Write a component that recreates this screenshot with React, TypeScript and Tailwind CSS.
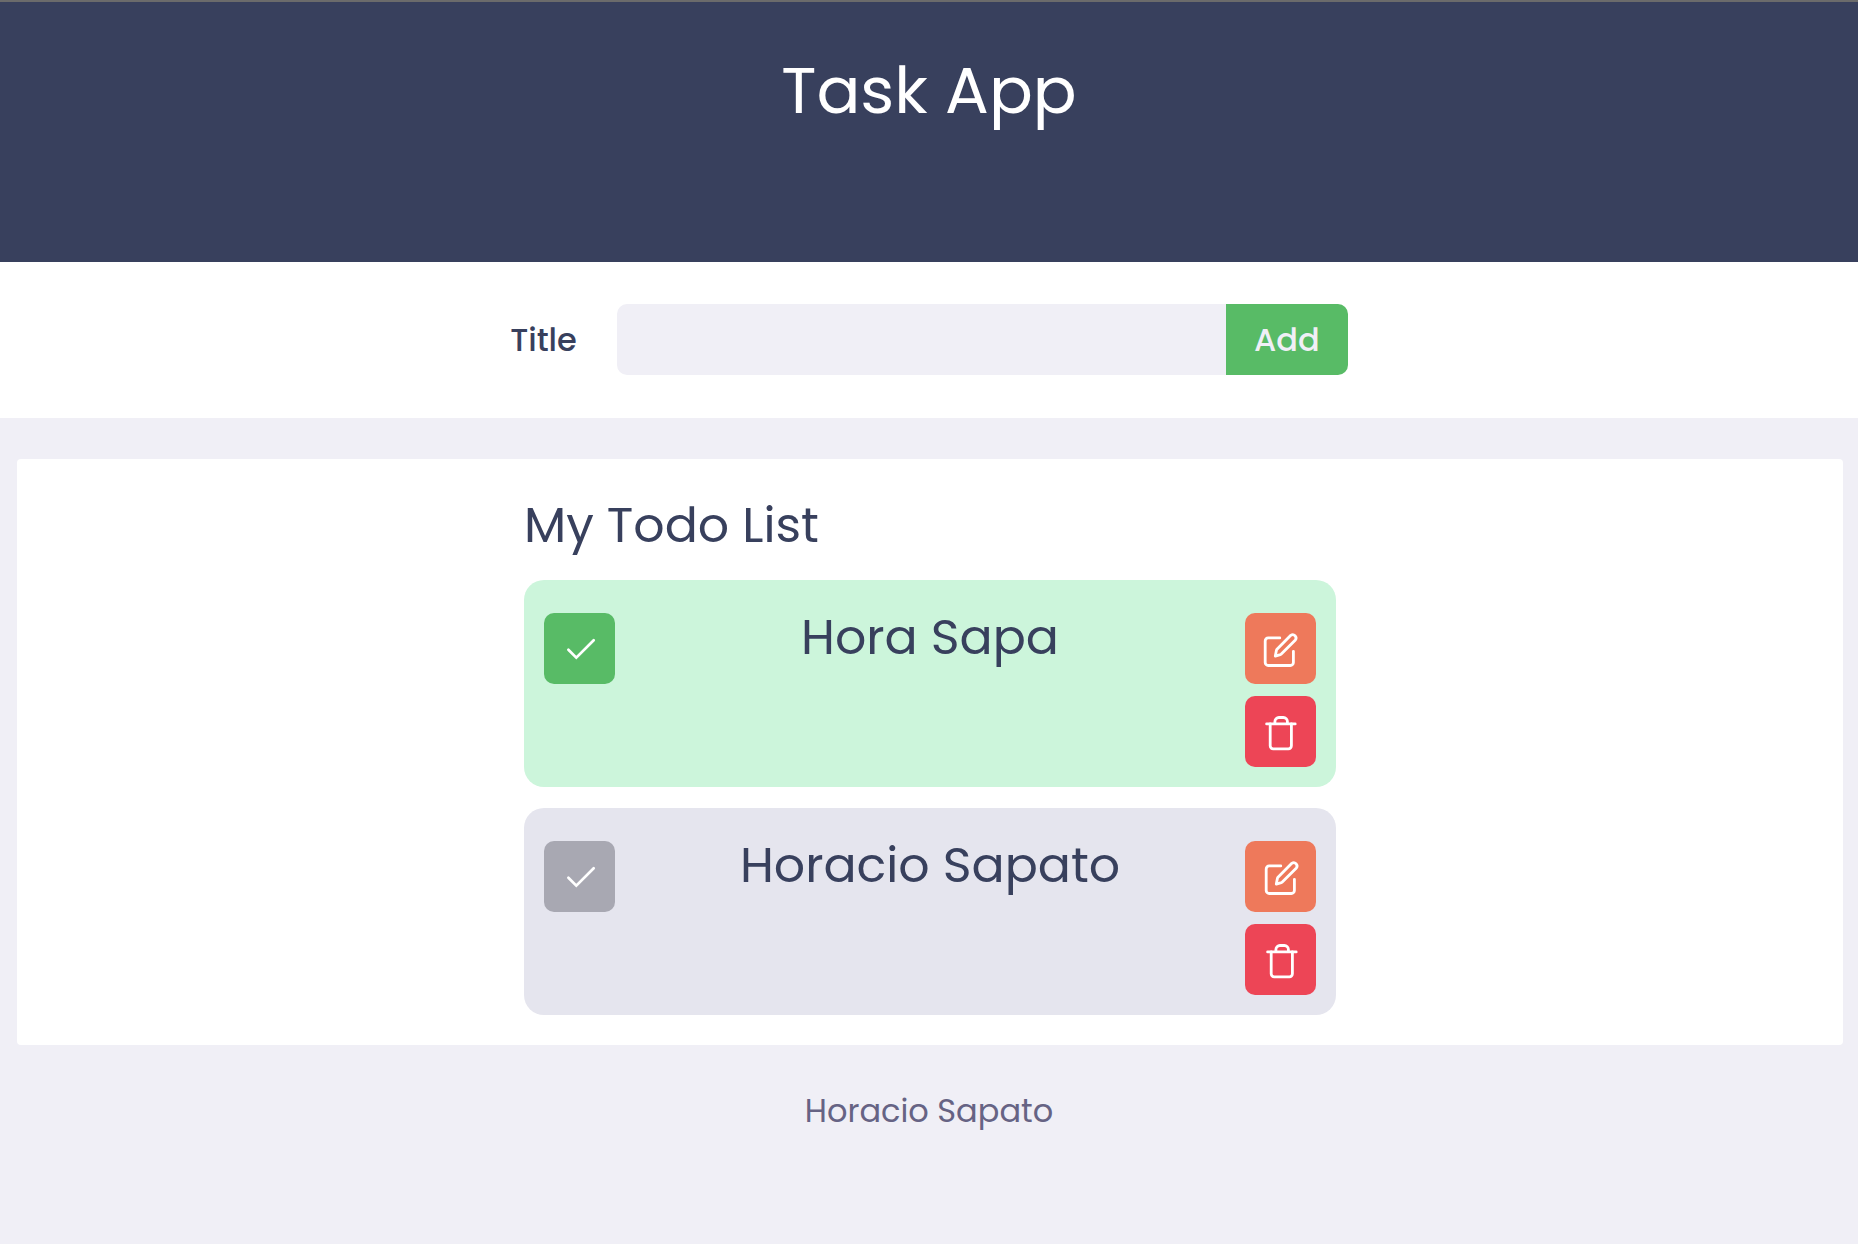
import { useState } from "react";
import type { FormEvent, ReactNode } from "react";

type Task = { id: number; title: string; done: boolean };

function Icon({ children }: { children: ReactNode }) {
  return (
    <svg
      viewBox="0 0 36 36"
      className="size-9 overflow-visible"
      fill="none"
      stroke="currentColor"
      strokeWidth="2.8"
      strokeLinecap="round"
      strokeLinejoin="round"
      aria-hidden="true"
    >
      {children}
    </svg>
  );
}

const CheckIcon = () => (
  <Icon>
    <path d="M6.4 18.8L14.3 26.6L31.7 9.3" strokeWidth="2.7" strokeLinejoin="miter" />
  </Icon>
);

const EditIcon = () => (
  <Icon>
    <path d="M17.8 6.9H6.2a3 3 0 0 0-3 3v21.6a3 3 0 0 0 3 3h22.2a3 3 0 0 0 3-3V20.3" />
    <path d="M28.8 4.3a3.3 3.3 0 0 1 4.6 4.6L19.3 23Q18.9 23.4 18.3 23.6L13.3 25.1L14.4 19.6Q14.5 18.8 15 18.2Z" />
  </Icon>
);

const TrashIcon = () => (
  <Icon>
    <path d="M4.6 9.9H33.2" />
    <path d="M12.9 9.6V7.5a4 4 0 0 1 4-4h4.5a4 4 0 0 1 4 4V9.6" />
    <path d="M8.2 10V31.8a3 3 0 0 0 3 3h15.2a3 3 0 0 0 3-3V10" />
  </Icon>
);

function IconButton({ label, color, onClick, children }: { label: string; color: string; onClick?: () => void; children: ReactNode }) {
  return (
    <button
      type="button"
      aria-label={label}
      onClick={onClick}
      className={`flex size-[71px] items-center justify-center rounded-[10px] text-white ${color}`}
    >
      {children}
    </button>
  );
}

export default function App() {
  const [tasks, setTasks] = useState<Task[]>([
    { id: 1, title: "Hora Sapa", done: true },
    { id: 2, title: "Horacio Sapato", done: false },
  ]);
  const [title, setTitle] = useState("");

  const add = (e: FormEvent) => {
    e.preventDefault();
    if (!title.trim()) return;
    setTasks([...tasks, { id: Date.now(), title, done: false }]);
    setTitle("");
  };
  const toggle = (id: number) => setTasks(tasks.map((t) => (t.id === id ? { ...t, done: !t.done } : t)));
  const remove = (id: number) => setTasks(tasks.filter((t) => t.id !== id));

  return (
    <div className="min-h-screen bg-[#f0eff6] font-[Poppins,Inter,sans-serif] text-[#38405d]">
      <header className="border-t-2 border-[#6b6b6b] bg-[#38405d] pt-[49px] pb-[131px] text-center text-white">
        <h1 className="text-[65px] leading-[80px]">Task App</h1>
      </header>

      <form onSubmit={add} className="flex items-center justify-center bg-white px-4 pt-[42px] pb-[43px]">
        <label htmlFor="title" className="mr-10 text-[32px] leading-10 font-medium">
          Title
        </label>
        <input
          id="title"
          value={title}
          onChange={(e) => setTitle(e.target.value)}
          className="h-[71px] w-full max-w-[609px] rounded-l-[10px] bg-[#f0eff6] px-5 text-[32px] outline-none"
        />
        <button type="submit" className="h-[71px] w-[122px] shrink-0 rounded-r-[10px] bg-[#58bb66] text-[32px] font-medium text-[#f0eff6]">
          Add
        </button>
      </form>

      <main className="mt-[41px] mr-[15px] ml-[17px] rounded bg-white px-4 pt-9 pb-[30px]">
        <section className="mx-auto max-w-[812px]">
          <h2 className="text-[49px] leading-[61px]">My Todo List</h2>
          <ul className="mt-6 flex flex-col gap-[21px]">
            {tasks.map((t) => (
              <li
                key={t.id}
                className={`flex items-start justify-between rounded-[20px] px-5 pt-[33px] pb-5 ${t.done ? "bg-[#ccf5db]" : "bg-[#e5e5ee]"}`}
              >
                <IconButton label="Toggle done" color={t.done ? "bg-[#58bb66]" : "bg-[#a8a8b2]"} onClick={() => toggle(t.id)}>
                  <CheckIcon />
                </IconButton>
                <h3 className="text-[49px] leading-12">{t.title}</h3>
                <div className="flex flex-col gap-3">
                  <IconButton label="Edit task" color="bg-[#ee795b]">
                    <EditIcon />
                  </IconButton>
                  <IconButton label="Delete task" color="bg-[#ed4556]" onClick={() => remove(t.id)}>
                    <TrashIcon />
                  </IconButton>
                </div>
              </li>
            ))}
          </ul>
        </section>
      </main>

      <footer className="py-[46px] text-center text-[32px] leading-10 text-[#666384]">Horacio Sapato</footer>
    </div>
  );
}
